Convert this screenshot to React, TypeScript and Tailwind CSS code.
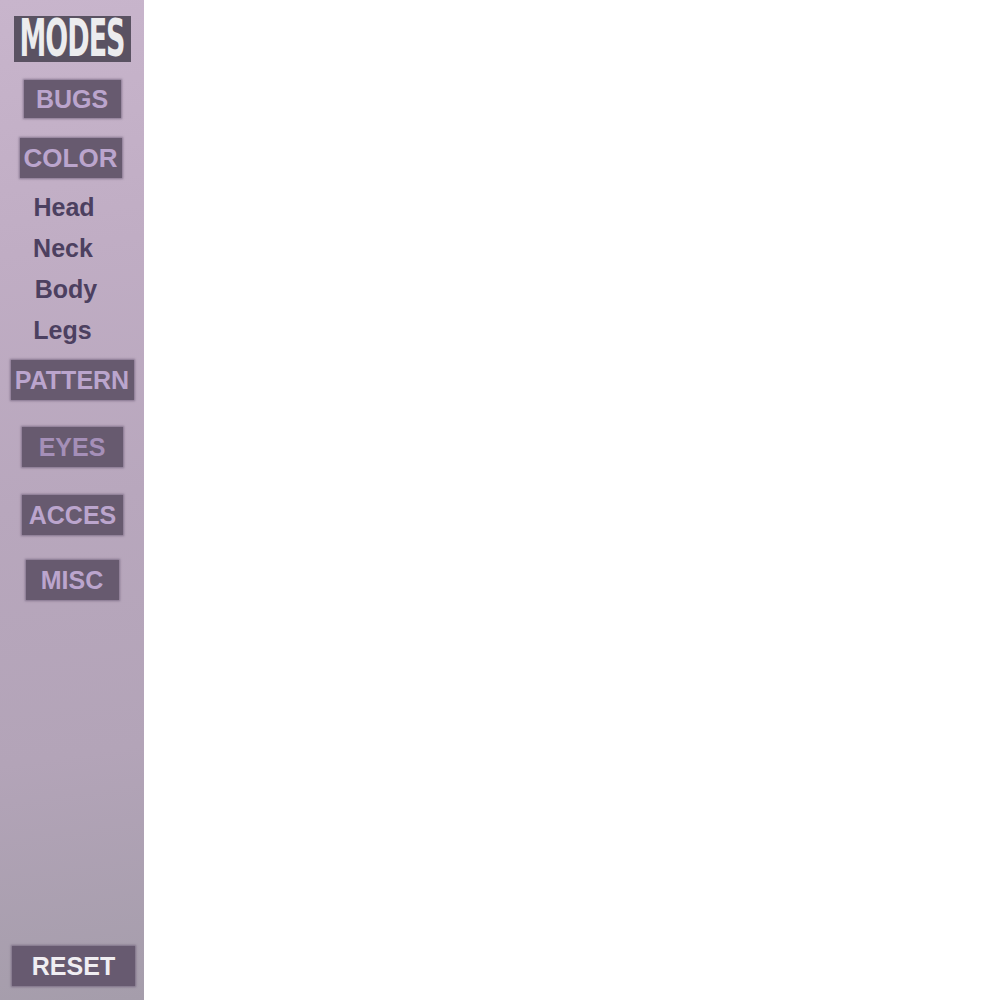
import React from "react";

const tabs = [
  { label: "BUGS", w: "w-[97px] h-[38px]", mt: "mt-[18px]" },
  { label: "COLOR", w: "w-[102px] h-[40px] -ml-[3px]", mt: "mt-[20px]", big: true },
];

const parts = [
  { name: "Head", shift: "-ml-[16px]" },
  { name: "Neck", shift: "-ml-[18px]" },
  { name: "Body", shift: "-ml-[12px]" },
  { name: "Legs", shift: "-ml-[19px]" },
];

const lower = [
  { label: "PATTERN", w: "w-[123px]", mt: "mt-[16px]" },
  { label: "EYES", w: "w-[101px]", mt: "mt-[27px]", dim: true },
  { label: "ACCES", w: "w-[101px] ml-[1px]", mt: "mt-[28px]" },
  { label: "MISC", w: "w-[93px]", mt: "mt-[25px]" },
];

const ModeButton = ({
  label,
  className,
  dim,
  big,
}: {
  label: string;
  className: string;
  dim?: boolean;
  big?: boolean;
}) => (
  <button
    className={`flex items-center justify-center bg-[#675a6f] shadow-[0_0_2px_1px_rgba(95,80,105,0.6)] font-bold leading-none ${
      big ? "text-[26px]" : "text-[25px]"
    } ${dim ? "text-[#a58fb8]" : "text-[#bba5cd]"} ${className}`}
  >
    {label}
  </button>
);

export default function App() {
  return (
    <div className="flex w-[1000px] h-[1000px] bg-white font-['Liberation_Sans',Arial,sans-serif]">
      <aside className="relative flex flex-col items-center w-[144px] h-full bg-[linear-gradient(172deg,#c8b5cc_0%,#c0adc4_25%,#b8a7bd_50%,#b3a4b8_75%,#a59dab_100%)]">
        <div className="mt-[16px] flex items-center justify-center w-[117px] h-[46px] bg-[#5a5262]">
          <span className="inline-block w-[106px] whitespace-nowrap text-center font-['DejaVu_Sans_Condensed','DejaVu_Sans',sans-serif] font-bold text-[30px] leading-none text-[#ececee] scale-y-[1.7] tracking-[-1px]">
            MODES
          </span>
        </div>

        {tabs.map((t) => (
          <ModeButton key={t.label} label={t.label} className={`${t.w} ${t.mt}`} big={t.big} />
        ))}

        <ul className="mt-[16px] flex flex-col items-center gap-[14px] text-[25px] font-bold leading-[27px] text-[#4c4060]">
          {parts.map((p) => (
            <li key={p.name} className={p.shift}>
              {p.name}
            </li>
          ))}
        </ul>

        {lower.map((t) => (
          <ModeButton key={t.label} label={t.label} className={`${t.w} h-[40px] ${t.mt}`} dim={t.dim} />
        ))}

        <button className="mt-auto mb-[14px] ml-[3px] flex items-center justify-center w-[123px] h-[40px] bg-[#675a70] shadow-[0_0_2px_1px_rgba(95,80,105,0.6)] text-[25px] font-bold leading-none text-[#f0eef2]">
          RESET
        </button>
      </aside>
      <main className="flex-1 bg-white" />
    </div>
  );
}
